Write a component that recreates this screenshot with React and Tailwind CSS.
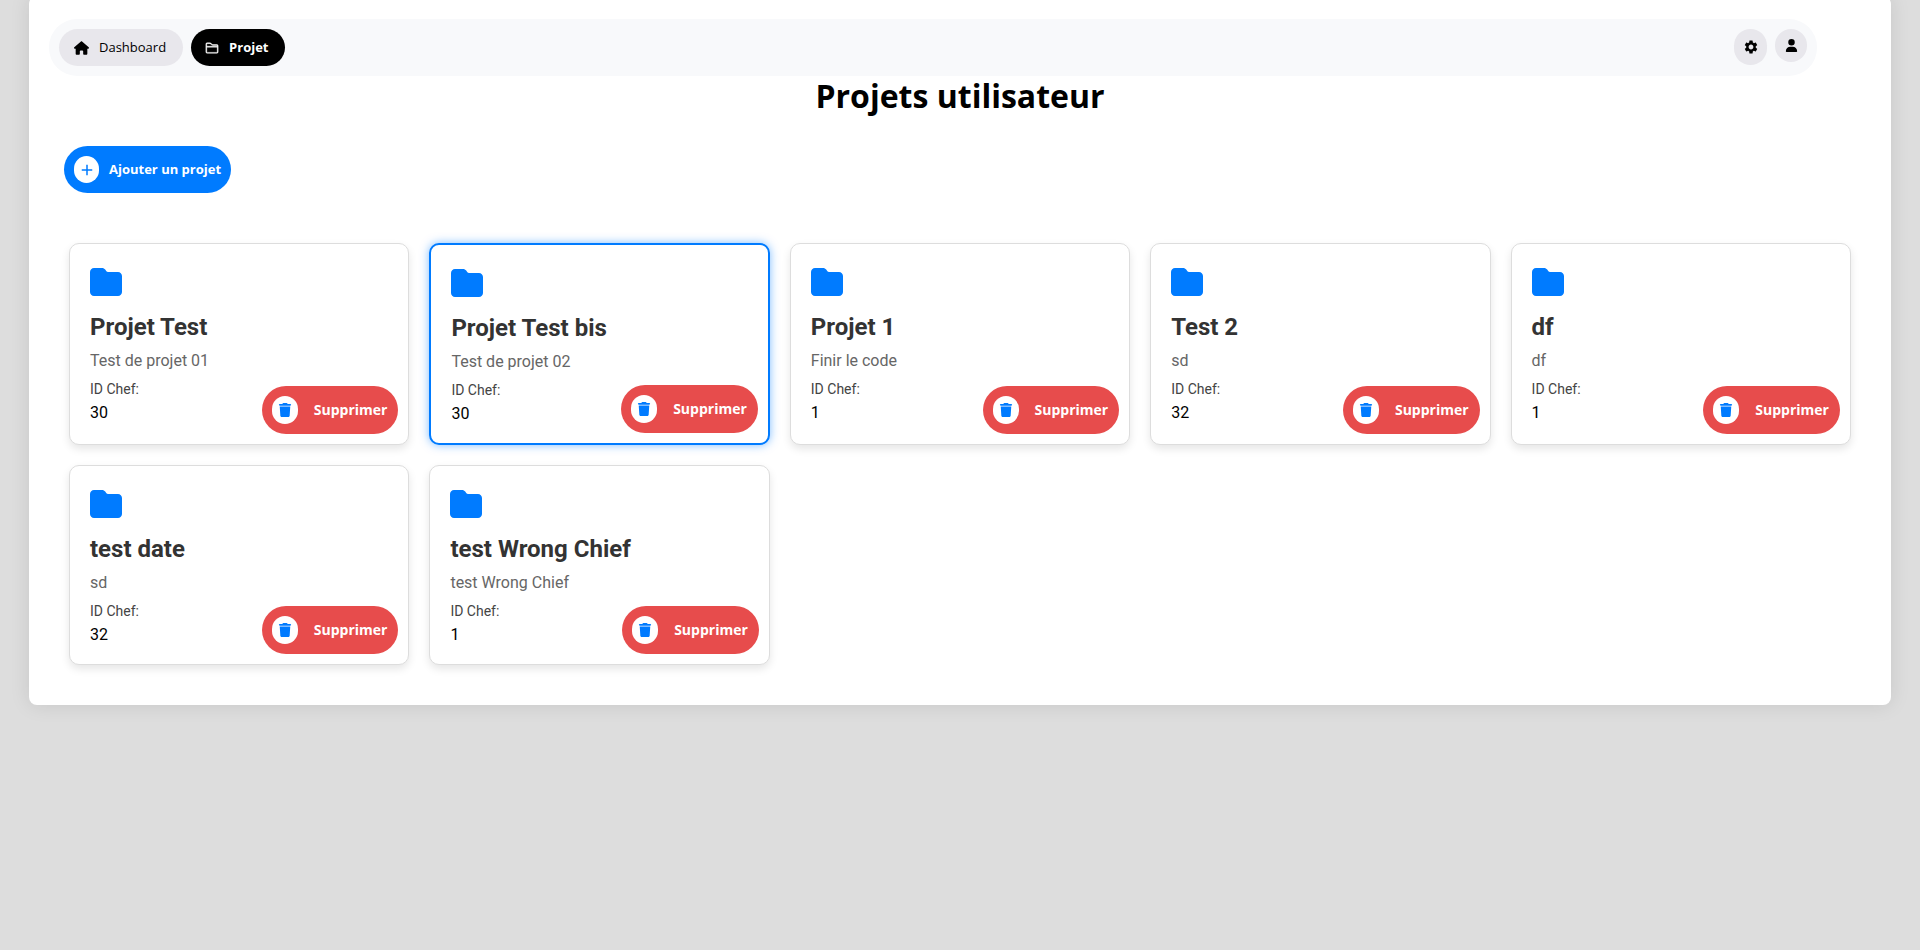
import { FaFolder, FaHouse, FaTrash, FaUser } from "react-icons/fa6";
import { BsFolder2 } from "react-icons/bs";
import { MdAdd, MdSettings } from "react-icons/md";

const projects = [
  { name: "Projet Test", description: "Test de projet 01", chief: 30 },
  { name: "Projet Test bis", description: "Test de projet 02", chief: 30, selected: true },
  { name: "Projet 1", description: "Finir le code", chief: 1 },
  { name: "Test 2", description: "sd", chief: 32 },
  { name: "df", description: "df", chief: 1 },
  { name: "test date", description: "sd", chief: 32 },
  { name: "test Wrong Chief", description: "test Wrong Chief", chief: 1 },
];

function NavBar() {
  return (
    <nav className="mr-[54px] flex items-start justify-between rounded-[28px] bg-[#f8f9fb] p-2.5 text-[13px]">
      <div className="flex gap-2">
        <a href="#dashboard" className="flex h-[37px] items-center gap-2.5 rounded-full bg-[#e8e7ec] pr-[17px] pl-[15px]">
          <FaHouse className="h-[14px] w-[15px]" />
          Dashboard
        </a>
        <a href="#projet" className="flex h-[37px] items-center gap-2.5 rounded-full bg-black pr-4 pl-[14px] font-bold text-white">
          <BsFolder2 className="size-[14px] stroke-current stroke-[0.5]" />
          Projet
        </a>
      </div>
      <div className="flex items-start gap-2">
        <button type="button" aria-label="Paramètres" className="flex h-9 w-[33px] items-center justify-center rounded-full bg-[#e8e7ec]">
          <MdSettings className="size-4" />
        </button>
        <button type="button" aria-label="Profil" className="flex h-[33px] w-8 items-center justify-center rounded-full bg-[#e8e7ec]">
          <FaUser className="size-[13px]" />
        </button>
      </div>
    </nav>
  );
}

function ProjectCard({ name, description, chief, selected }) {
  return (
    <li
      className={
        "relative rounded-[10px] bg-white px-5 pt-[22px] pb-5 font-[Roboto,sans-serif] " +
        (selected
          ? "border-2 border-[#007bff] shadow-[0_0_10px_rgba(0,123,255,0.5)]"
          : "border border-[#dddddd] shadow-[0_4px_8px_rgba(0,0,0,0.1)]")
      }
    >
      <FaFolder className="size-8 text-[#007bff]" />
      <h2 className="mt-[15px] text-2xl leading-7 font-bold text-[#333333]">{name}</h2>
      <p className="mt-2.5 text-base leading-[19px] text-[#666666]">{description}</p>
      <p className="mt-[11px] text-sm leading-4 text-[#444444]">ID Chef:</p>
      <p className="mt-1.5 text-base leading-[19px]">{chief}</p>
      <button
        type="button"
        className="absolute right-2.5 bottom-2.5 flex h-12 items-center gap-4 rounded-full bg-[#e74c4c] pr-[11px] pl-2.5 font-['Open_Sans',sans-serif] text-sm font-bold text-white"
      >
        <span className="flex h-7 w-[26px] items-center justify-center rounded-full bg-white">
          <FaTrash className="size-[14px] text-[#007bff]" />
        </span>
        Supprimer
      </button>
    </li>
  );
}

export default function App() {
  return (
    <div className="flow-root min-h-screen bg-[#dddddd] px-[29px] pb-8 font-['Open_Sans',sans-serif] text-black">
      <main className="-mt-1 rounded-lg bg-white px-5 pt-[23px] pb-10 shadow-[0_0_20px_rgba(0,0,0,0.1)]">
        <NavBar />
        <h1 className="text-center text-[32px] leading-[39px] font-bold">Projets utilisateur</h1>
        <div className="px-5">
          <button
            type="button"
            className="mt-[31px] -ml-[5px] flex h-[47px] items-center gap-2.5 rounded-full bg-[#007bff] px-2.5 text-[13px] font-bold text-white"
          >
            <span className="flex h-[27px] w-[25px] items-center justify-center rounded-full bg-white">
              <MdAdd className="size-[18px] text-[#007bff]" />
            </span>
            Ajouter un projet
          </button>
          <ul className="mt-[50px] grid grid-cols-[repeat(auto-fill,minmax(300px,1fr))] gap-5">
            {projects.map((project) => (
              <ProjectCard key={project.name} {...project} />
            ))}
          </ul>
        </div>
      </main>
    </div>
  );
}
